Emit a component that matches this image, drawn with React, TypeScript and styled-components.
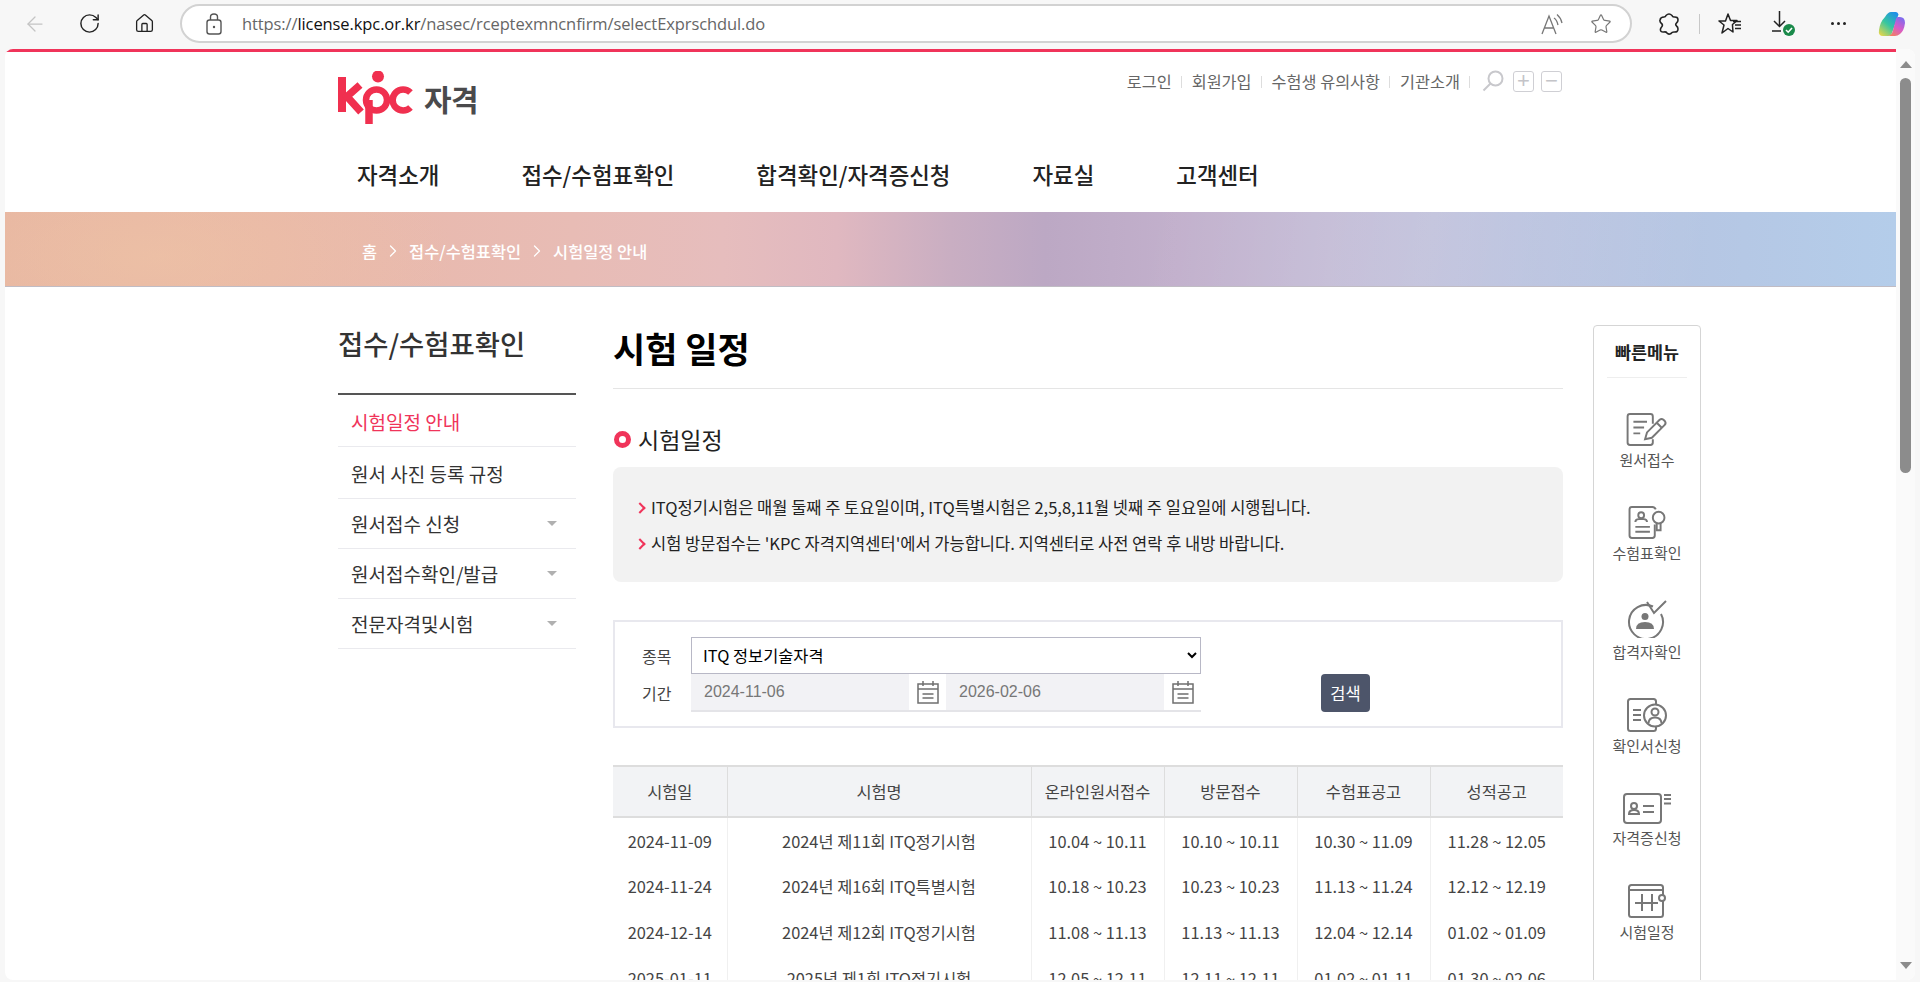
import styled, { createGlobalStyle } from "styled-components";
import { ArrowLeft, ChevronRight, House, RotateCw, Star } from "lucide-react";

const FONT = `"Noto Sans CJK KR", "Noto Sans", sans-serif`;

const GlobalStyle = createGlobalStyle`
    html, body {
        height: 100%;
        margin: 0;
        overflow: hidden;
        background: #f7f7f7;
        font-family: ${FONT};
    }
    * {
        box-sizing: border-box;
    }
`;

const navItems = ["자격소개", "접수/수험표확인", "합격확인/자격증신청", "자료실", "고객센터"];
const utilItems = ["로그인", "회원가입", "수험생 유의사항", "기관소개"];
const sideItems = [
    { name: "시험일정 안내", active: true, sub: false },
    { name: "원서 사진 등록 규정", active: false, sub: false },
    { name: "원서접수 신청", active: false, sub: true },
    { name: "원서접수확인/발급", active: false, sub: true },
    { name: "전문자격및시험", active: false, sub: true },
];
const columns = [
    { name: "시험일", width: 114 },
    { name: "시험명", width: 304 },
    { name: "온라인원서접수", width: 133 },
    { name: "방문접수", width: 133 },
    { name: "수험표공고", width: 133 },
    { name: "성적공고", width: 133 },
];
const rows = [
    ["2024-11-09", "2024년 제11회 ITQ정기시험", "10.04 ~ 10.11", "10.10 ~ 10.11", "10.30 ~ 11.09", "11.28 ~ 12.05"],
    ["2024-11-24", "2024년 제16회 ITQ특별시험", "10.18 ~ 10.23", "10.23 ~ 10.23", "11.13 ~ 11.24", "12.12 ~ 12.19"],
    ["2024-12-14", "2024년 제12회 ITQ정기시험", "11.08 ~ 11.13", "11.13 ~ 11.13", "12.04 ~ 12.14", "01.02 ~ 01.09"],
    ["2025-01-11", "2025년 제1회 ITQ정기시험", "12.05 ~ 12.11", "12.11 ~ 12.11", "01.02 ~ 01.11", "01.30 ~ 02.06"],
];

const QuickIcon1 = () => (
    <QuickSvg width="42" height="33" viewBox="0 0 42 34">
        <path d="M27 11V3.500Q27 1 24.500 1H3.500Q1 1 1 3.500V30.500Q1 33 3.500 33H24.500Q27 33 27 30.500V27" />
        <path d="M7 9H21M7 15H18M7 21H14" />
        <path d="M19 27L21 20L34 7Q36 5.500 38 7L39.500 8.500Q41 10.500 39 12.500L26 25.500Z" />
        <path d="M31 10L36.500 15.500" />
    </QuickSvg>
);

const QuickIcon2 = () => (
    <QuickSvg width="38" height="33" viewBox="0 0 38 34">
        <path d="M28 3.500Q27 1 24.500 1H3.500Q1 1 1 3.500V30.500Q1 33 3.500 33H24.500Q27 33 27 30.500V19" />
        <circle cx="13" cy="9.500" r="3" />
        <path d="M7 16.500Q7 13.500 10.500 13.500H15.500Q19 13.500 19 16.500" />
        <path d="M7 21.500H22M7 26.500H22" />
        <circle cx="31" cy="12" r="6" />
        <path d="M29 18V25H33V18" />
    </QuickSvg>
);

const QuickIcon3 = () => (
    <QuickSvg width="40" height="38" viewBox="0 0 40 38">
        <path d="M26 6.500A17 17 0 1 0 34 14" />
        <path d="M20 2L27 13L39 1" />
        <circle cx="18" cy="16.500" r="3.500" fill="#777" stroke="none" />
        <path d="M9 29Q9 22 18 22Q27 22 27 29Z" fill="#777" stroke="none" />
    </QuickSvg>
);

const QuickIcon4 = () => (
    <QuickSvg width="40" height="34" viewBox="0 0 40 34">
        <path d="M29 6V3.500Q29 1 26.500 1H3.500Q1 1 1 3.500V30.500Q1 33 3.500 33H26.500Q29 33 29 30.500V29" />
        <path d="M6 12H14M6 17H14M6 22H14" />
        <circle cx="28" cy="17.500" r="11" />
        <circle cx="28" cy="14" r="3.500" />
        <path d="M21.500 25Q22 19.500 28 19.500Q34 19.500 34.500 25" />
    </QuickSvg>
);

const QuickIcon5 = () => (
    <QuickSvg width="49" height="32" viewBox="0 0 49 32">
        <rect x="1" y="2" width="37" height="29" rx="3" />
        <circle cx="11" cy="14" r="3" />
        <path d="M6 22Q6 18 11 18Q16 18 16 22Z" />
        <path d="M20 14H31M20 20H31" />
        <path d="M41 3H48M41 7H48M41 11.500H48" />
    </QuickSvg>
);

const QuickIcon6 = () => (
    <QuickSvg width="38" height="34" viewBox="0 0 38 34">
        <path d="M35 11V3.500Q35 1 32.500 1H3.500Q1 1 1 3.500V30.500Q1 33 3.500 33H32.500Q35 33 35 30.500V17" />
        <path d="M1 6H35" />
        <path d="M7 19H30M14 10V27M24 10V27" />
        <circle cx="34" cy="14" r="3" />
    </QuickSvg>
);

const quickItems = [
    { name: "원서접수", Icon: QuickIcon1 },
    { name: "수험표확인", Icon: QuickIcon2 },
    { name: "합격자확인", Icon: QuickIcon3 },
    { name: "확인서신청", Icon: QuickIcon4 },
    { name: "자격증신청", Icon: QuickIcon5 },
    { name: "시험일정", Icon: QuickIcon6 },
];

const CalendarIcon = () => (
    <svg width="24" height="24" viewBox="0 0 24 24" fill="none" stroke="#6f6f6f" strokeWidth="1.500">
        <rect x="2" y="4" width="20" height="19" />
        <path d="M2 9H22M7 1V6M17 1V6M6.500 14H17.500M6.500 18H17.500" />
    </svg>
);

const KpcLogo = () => (
    <svg width="78" height="55" viewBox="0 0 78 55" fill="none" stroke="#f0304f">
        <path d="M4 6V41" strokeWidth="8" />
        <path d="M22 14L9 25.500L23 41" strokeWidth="7.500" />
        <circle cx="38.500" cy="29" r="10.500" strokeWidth="6.500" />
        <path d="M31 29V53" strokeWidth="7.500" />
        <circle cx="40" cy="5.500" r="6" fill="#f0304f" stroke="none" />
        <path d="M72.500 21.500A10.500 10.500 0 1 0 72.500 36.500" strokeWidth="6.500" />
    </svg>
);

const LockIcon = () => (
    <svg width="18" height="24" viewBox="0 0 18 24" fill="none" stroke="#555" strokeWidth="1.400">
        <rect x="2" y="8" width="14" height="14" rx="2.500" />
        <path d="M5.500 8V5Q5.500 2 9 2Q12.500 2 12.500 5V8" />
        <circle cx="9" cy="15" r="1.200" fill="#555" stroke="none" />
    </svg>
);

const ReadAloudIcon = () => (
    <svg width="24" height="24" viewBox="0 0 24 24" fill="none" stroke="#777" strokeWidth="1.300">
        <path d="M2 22L9 4L16 22M4.500 16H13.500" />
        <path d="M14 6Q17 8 18 13M17 2.500Q21 6 22 11" />
    </svg>
);

const ExtensionIcon = () => (
    <svg width="22" height="24" viewBox="0 0 22 24" fill="none" stroke="#222" strokeWidth="1.600" strokeLinejoin="round">
        <path d="M8 3.500Q11 0.500 14 3.500Q14.500 5 16 5Q20 4.500 20 8Q20 10 18.500 11Q17 12.500 18.500 14Q20 15 20 17Q20 20.500 16 20Q14 20 13 21.500Q10.500 23 9 21Q8 19.500 6 20Q2 20.500 2.500 17Q3 15.500 4 14.500Q5 12.500 3.500 11.500Q1.500 10 2 8Q2.500 5 6 5Q7.500 5 8 3.500Z" />
    </svg>
);

const FavoritesIcon = () => (
    <svg width="24" height="24" viewBox="0 0 24 24" fill="none" stroke="#222" strokeWidth="1.500" strokeLinejoin="round">
        <path d="M10 2L12.500 8.500H19L14.500 12.500V13.500L15 20L10 16.500L4 21L6 13L1 9H7.500Z" />
        <path d="M15 9.500H23M17 13H23M17 16.500H23" />
    </svg>
);

const DownloadIcon = () => (
    <svg width="24" height="26" viewBox="0 0 24 26" fill="none" stroke="#222" strokeWidth="1.500">
        <path d="M7.500 0V15M2 10L7.500 15.500L13 10M0 20H9" />
        <circle cx="17" cy="19" r="6" fill="#1a8a4a" stroke="none" />
        <path d="M14 19L16.200 21.200L20 17" stroke="#fff" strokeWidth="1.600" />
    </svg>
);

const CopilotIcon = () => (
    <svg width="28" height="26" viewBox="0 0 28 26">
        <defs>
            <linearGradient id="copilotLeft" x1="0.800" y1="0" x2="0.100" y2="1">
                <stop offset="0" stopColor="#1f8fe8" />
                <stop offset="0.500" stopColor="#36c6a0" />
                <stop offset="1" stopColor="#e8d64a" />
            </linearGradient>
            <linearGradient id="copilotRight" x1="0.800" y1="0" x2="0.200" y2="1">
                <stop offset="0" stopColor="#7a6cf0" />
                <stop offset="0.500" stopColor="#d85bc8" />
                <stop offset="1" stopColor="#f4845a" />
            </linearGradient>
        </defs>
        <path d="M13 1H18Q20 1 20.500 3.500L14 22Q13 25 10 25H5Q0 25 1 19Q2 11 7 6Q10 1 13 1Z" fill="url(#copilotLeft)" />
        <path d="M20 6H22Q27 6 27 12Q26 20 22 23Q19 25.500 16 25H9Q13 25 14.500 21L17.500 10Q18 6 20 6Z" fill="url(#copilotRight)" />
    </svg>
);

const App = () => {
    return (
        <Window>
            <GlobalStyle />
            <Toolbar>
                <ToolSlot>
                    <ArrowLeft size={24} color="#c4c4c4" strokeWidth={1.25} />
                </ToolSlot>
                <ToolSlot>
                    <RotateCw size={23} color="#222" strokeWidth={1.5} />
                </ToolSlot>
                <ToolSlot>
                    <House size={21} color="#222" strokeWidth={1.5} />
                </ToolSlot>
                <AddressBar>
                    <LockIcon />
                    <Url>
                        https://<Host>license.kpc.or.kr</Host>/nasec/rceptexmncnfirm/selectExprschdul.do
                    </Url>
                    <AddressActions>
                        <ReadAloudIcon />
                        <Star size={22} color="#777" strokeWidth={1.3} />
                    </AddressActions>
                </AddressBar>
                <ToolGroup>
                    <ToolSlot $narrow>
                        <ExtensionIcon />
                    </ToolSlot>
                    <ToolDivider />
                    <ToolSlot $narrow>
                        <FavoritesIcon />
                    </ToolSlot>
                    <ToolSlot $narrow>
                        <DownloadIcon />
                    </ToolSlot>
                    <ToolSlot $narrow>
                        <Dots>
                            <i />
                            <i />
                            <i />
                        </Dots>
                    </ToolSlot>
                    <ToolSlot $narrow>
                        <CopilotIcon />
                    </ToolSlot>
                </ToolGroup>
            </Toolbar>
            <Frame>
                <Page>
                    <Header>
                        <TopRow>
                            <Logo>
                                <KpcLogo />
                                <LogoText>자격</LogoText>
                            </Logo>
                            <Util>
                                {utilItems.map((name) => (
                                    <UtilLink key={name}>{name}</UtilLink>
                                ))}
                                <SearchIcon>
                                    <svg width="22" height="22" viewBox="0 0 22 22" fill="none" stroke="#c8c8cc" strokeWidth="2">
                                        <circle cx="13.500" cy="8.500" r="7" />
                                        <path d="M8.500 13.500L1.500 20.500" />
                                    </svg>
                                </SearchIcon>
                                <ZoomButton>+</ZoomButton>
                                <ZoomButton>−</ZoomButton>
                            </Util>
                        </TopRow>
                        <Nav>
                            {navItems.map((name) => (
                                <NavItem key={name}>{name}</NavItem>
                            ))}
                        </Nav>
                    </Header>
                    <Band>
                        <Breadcrumb>
                            <span>홈</span>
                            <ChevronRight size={20} strokeWidth={1.5} />
                            <span>접수/수험표확인</span>
                            <ChevronRight size={20} strokeWidth={1.5} />
                            <span>시험일정 안내</span>
                        </Breadcrumb>
                    </Band>
                    <Body>
                        <Center>
                            <Side>
                                <SideTitle>접수/수험표확인</SideTitle>
                                {sideItems.map(({ name, active, sub }) => (
                                    <SideItem key={name} $active={active} $sub={sub}>
                                        {name}
                                        {sub && <SideArrow />}
                                    </SideItem>
                                ))}
                            </Side>
                            <Main>
                                <PageTitle>시험 일정</PageTitle>
                                <SectionTitle>
                                    <Bullet />
                                    시험일정
                                </SectionTitle>
                                <InfoBox>
                                    <InfoLine>
                                        ITQ정기시험은 매월 둘째 주 토요일이며, ITQ특별시험은 2,5,8,11월 넷째 주 일요일에 시행됩니다.
                                    </InfoLine>
                                    <InfoLine>
                                        시험 방문접수는 'KPC 자격지역센터'에서 가능합니다. 지역센터로 사전 연락 후 내방 바랍니다.
                                    </InfoLine>
                                </InfoBox>
                                <SearchBox>
                                    <FieldLabel>종목</FieldLabel>
                                    <Select defaultValue="itq">
                                        <option value="itq">ITQ 정보기술자격</option>
                                    </Select>
                                    <span />
                                    <span />
                                    <FieldLabel>기간</FieldLabel>
                                    <DateRange>
                                        <DateInput readOnly value="2024-11-06" />
                                        <CalendarButton>
                                            <CalendarIcon />
                                        </CalendarButton>
                                        <DateInput readOnly value="2026-02-06" />
                                        <CalendarButton>
                                            <CalendarIcon />
                                        </CalendarButton>
                                    </DateRange>
                                    <span />
                                    <SearchButton>검색</SearchButton>
                                </SearchBox>
                                <Table>
                                    <colgroup>
                                        {columns.map(({ name, width }) => (
                                            <col key={name} width={width} />
                                        ))}
                                    </colgroup>
                                    <thead>
                                        <tr>
                                            {columns.map(({ name }) => (
                                                <Th key={name}>{name}</Th>
                                            ))}
                                        </tr>
                                    </thead>
                                    <tbody>
                                        {rows.map((row) => (
                                            <tr key={row[0]}>
                                                {row.map((cell, idx) => (
                                                    <Td key={cell + String(idx)}>{cell}</Td>
                                                ))}
                                            </tr>
                                        ))}
                                    </tbody>
                                </Table>
                            </Main>
                        </Center>
                        <QuickColumn>
                            <QuickMenu>
                                <QuickTitle>빠른메뉴</QuickTitle>
                                <QuickList>
                                    {quickItems.map(({ name, Icon }) => (
                                        <QuickItem key={name}>
                                            <Icon />
                                            <span>{name}</span>
                                        </QuickItem>
                                    ))}
                                </QuickList>
                            </QuickMenu>
                        </QuickColumn>
                    </Body>
                </Page>
                <Scrollbar>
                    <ScrollArrow />
                    <ScrollThumb />
                    <ScrollArrow $down />
                </Scrollbar>
            </Frame>
        </Window>
    );
};

const Window = styled.div`
    display: flex;
    flex-direction: column;

    height: 982px;

    background: #f7f7f7;
`;

const Toolbar = styled.div`
    display: flex;
    align-items: center;

    height: 49px;

    padding-left: 7px;
    padding-bottom: 2px;
`;

const ToolSlot = styled.div<{ $narrow?: boolean }>`
    display: flex;
    align-items: center;
    justify-content: center;

    width: ${(props) => (props.$narrow ? "54px" : "55px")};
`;

const AddressBar = styled.div`
    display: flex;
    align-items: center;

    width: 1452px;
    height: 39px;

    margin-left: 8px;
    padding: 0 18px 0 23px;

    background: #fff;
    border: 2px solid #d2d2d2;
    border-radius: 20px;
`;

const Url = styled.span`
    flex: 1;

    margin-left: 19px;

    font-family: "Open Sans", sans-serif;
    font-size: 16.500px;
    letter-spacing: -0.1px;
    color: #666;
`;

const Host = styled.span`
    color: #111;
`;

const AddressActions = styled.div`
    display: flex;
    align-items: center;
    gap: 26px;
`;

const ToolGroup = styled.div`
    display: flex;
    align-items: center;

    margin-left: 10px;
`;

const ToolDivider = styled.div`
    width: 1px;
    height: 20px;

    margin: 0 3px;

    background: #c8c8c8;
`;

const Dots = styled.div`
    display: flex;
    gap: 3px;

    i {
        width: 3px;
        height: 3px;

        background: #222;
        border-radius: 50%;
    }
`;

const Frame = styled.div`
    display: flex;

    height: 931px;

    margin-left: 5px;
    margin-right: 5px;

    overflow: hidden;

    background: #fff;
    border-radius: 8px;
`;

const Page = styled.div`
    flex: 1;

    min-width: 0;

    overflow: hidden;

    border-top: 3px solid #f0345a;
`;

const Header = styled.div`
    width: 1225px;
    height: 160px;

    margin: 0 auto;
`;

const TopRow = styled.div`
    display: flex;
    justify-content: space-between;

    height: 92px;

    padding-top: 19px;
`;

const Logo = styled.div`
    display: flex;
    align-items: flex-start;
    gap: 8px;
`;

const LogoText = styled.span`
    margin-top: 9px;

    font-size: 30px;
    font-weight: 700;
    line-height: 36px;
    letter-spacing: -0.5px;
    color: #4a4a4c;
`;

const Util = styled.div`
    display: flex;
    align-items: center;

    height: 20px;

    padding-right: 1px;
`;

const UtilLink = styled.a`
    position: relative;

    padding-right: 10px;
    margin-right: 10px;

    font-size: 16.300px;
    color: #666;

    &::after {
        content: "";
        position: absolute;
        right: 0;
        top: 7px;

        width: 1px;
        height: 12px;

        background: #ddd;
    }
`;

const SearchIcon = styled.div`
    display: flex;

    margin-left: 2px;
    margin-right: 9px;
`;

const ZoomButton = styled.div`
    display: flex;
    align-items: center;
    justify-content: center;

    width: 21px;
    height: 21px;

    margin-right: 7px;

    font-size: 22px;
    font-family: "Liberation Sans", sans-serif;
    color: #c4c4c8;

    border: 1px solid #cfcfd4;
    border-radius: 3px;

    &:last-child {
        margin-right: 0;
    }
`;

const Nav = styled.nav`
    display: flex;
    align-items: center;
    gap: 82px;

    height: 60px;

    padding-left: 19px;
`;

const NavItem = styled.a`
    font-size: 22.400px;
    font-weight: 500;
    color: #222;
`;

const Band = styled.div`
    height: 75px;

    background:
        radial-gradient(ellipse 300px 120px at 8% 60%, rgba(240, 200, 165, 0.5), transparent),
        linear-gradient(100deg, transparent 60%, rgba(255, 255, 255, 0.12) 75%, transparent 90%),
        linear-gradient(
            90deg,
            #e7b5a2 0%,
            #e9b7a8 14%,
            #e8bcb5 30%,
            #e6bdbd 38%,
            #e0b8c0 44%,
            #c9aec2 50%,
            #bca8c4 55%,
            #c2b0cc 62%,
            #c2bad5 70%,
            #b9c1de 80%,
            #b5c8e5 92%,
            #b4cdea 100%
        );
    border-bottom: 1px solid #c0bcc4;
`;

const Breadcrumb = styled.div`
    display: flex;
    align-items: center;
    gap: 6px;

    width: 1225px;
    height: 74px;

    margin: 0 auto;
    padding-left: 24px;
    padding-top: 4px;

    font-size: 16.400px;
    font-weight: 500;
    color: #fff;
`;

const Body = styled.div`
    display: grid;
    grid-template-columns: 1fr 1225px 1fr;
`;

const Center = styled.div`
    grid-column: 2;

    display: grid;
    grid-template-columns: 238px 950px;
    column-gap: 37px;
`;

const Side = styled.aside`
    display: flex;
    flex-direction: column;
`;

const SideTitle = styled.h3`
    height: 108px;

    margin: 0;
    padding-top: 36px;

    font-size: 27.400px;
    font-weight: 500;
    line-height: 40px;
    color: #333;

    border-bottom: 2px solid #555;
`;

const SideItem = styled.a<{ $active?: boolean; $sub?: boolean }>`
    display: flex;
    align-items: center;
    justify-content: space-between;

    height: ${(props) => (props.$sub ? "50px" : "52px")};

    padding: ${(props) => (props.$sub ? "0" : "2px")} 19px 0 13px;

    font-size: 19px;
    color: ${(props) => (props.$active ? "#f0345a" : "#333")};

    border-bottom: 1px solid #eaeaee;
`;

const SideArrow = styled.i`
    width: 0;
    height: 0;

    border-top: 5px solid #b0b0b0;
    border-left: 5px solid transparent;
    border-right: 5px solid transparent;
`;

const Main = styled.main`
    display: flex;
    flex-direction: column;
`;

const PageTitle = styled.h2`
    height: 102px;

    margin: 0;
    padding-top: 40px;

    font-size: 35px;
    font-weight: 700;
    line-height: 42px;
    color: #000;

    border-bottom: 1px solid #e5e5e5;
`;

const SectionTitle = styled.h4`
    display: flex;
    align-items: center;
    gap: 7px;

    height: 30px;

    margin: 35px 0 13px 1px;

    font-size: 23px;
    font-weight: 400;
    color: #222;
`;

const Bullet = styled.i`
    width: 17px;
    height: 17px;

    border: 5px solid #f0345a;
    border-radius: 50%;
`;

const InfoBox = styled.div`
    height: 115px;

    padding: 22px 24px 0 38px;

    background: #f2f2f2;
    border-radius: 8px;
`;

const InfoLine = styled.p`
    position: relative;

    margin: 0;

    font-size: 16.500px;
    line-height: 36px;
    color: #222;

    &::before {
        content: "";
        position: absolute;
        left: -15px;
        top: 15px;

        width: 6px;
        height: 6px;

        border-top: 2px solid #f0345a;
        border-right: 2px solid #f0345a;
        transform: rotate(45deg);
    }
`;

const SearchBox = styled.div`
    display: grid;
    grid-template-columns: 76px 510px 120px 49px;
    grid-template-rows: 37px 38px;
    align-items: center;

    height: 108px;

    margin-top: 38px;
    padding-top: 15px;

    border: 2px solid #e8e8ee;
`;

const FieldLabel = styled.label`
    padding-left: 27px;

    font-size: 16px;
    color: #444;
`;

const Select = styled.select`
    width: 100%;
    height: 37px;

    padding-left: 7px;
    padding-bottom: 2px;

    font-family: ${FONT};
    font-size: 16.400px;
    color: #000;

    background: #fff;
    border: 1px solid #b8b8c6;
    border-radius: 0;
`;

const DateRange = styled.div`
    display: grid;
    grid-template-columns: 1fr 37px 1fr 37px;

    height: 38px;

    border-bottom: 2px solid #e4e4e8;
`;

const DateInput = styled.input`
    min-width: 0;
    width: 100%;

    padding-left: 13px;

    font-family: "Liberation Sans", sans-serif;
    font-size: 16px;
    color: #777;

    background: #f2f2f5;
    border: 0;
    outline: none;
`;

const CalendarButton = styled.div`
    display: flex;
    align-items: center;
    justify-content: center;
`;

const SearchButton = styled.button`
    width: 49px;
    height: 38px;

    padding: 0;

    font-family: ${FONT};
    font-size: 16.500px;
    color: #fff;

    background: #4d556a;
    border: 0;
    border-radius: 4px;
`;

const Table = styled.table`
    width: 950px;

    margin-top: 37px;

    table-layout: fixed;
    border-collapse: collapse;
`;

const Th = styled.th`
    height: 51px;

    padding: 0 0 2px;

    font-size: 16.400px;
    font-weight: 400;
    color: #444;

    background: #f2f3f5;
    border-top: 2px solid #ddd;
    border-bottom: 2px solid #ddd;
    border-left: 1px solid #ddd;

    &:first-child {
        border-left: 0;
    }
`;

const Td = styled.td`
    height: 46px;

    padding: 0;

    font-size: 16.400px;
    text-align: center;
    color: #444;

    border-left: 1px solid #f0f0f0;

    &:first-child {
        border-left: 0;
    }
`;

const QuickColumn = styled.div`
    padding-left: 30px;
`;

const QuickMenu = styled.div`
    width: 108px;
    height: 700px;

    margin-top: 38px;

    border: 1px solid #d5d5d5;
    border-radius: 4px;
`;

const QuickTitle = styled.div`
    height: 52px;

    margin: 0 13px;
    padding-top: 13px;

    font-size: 17.400px;
    font-weight: 700;
    line-height: 26px;
    text-align: center;
    color: #222;

    border-bottom: 1px solid #eee;
`;

const QuickList = styled.div`
    display: flex;
    flex-direction: column;
    gap: 36.250px;

    padding-top: 35px;
`;

const QuickItem = styled.a`
    display: flex;
    flex-direction: column;
    align-items: center;
    gap: 4px;

    font-size: 15px;
    line-height: 20px;
    white-space: nowrap;
    color: #555;
`;

const QuickSvg = styled.svg`
    fill: none;
    stroke: #777;
    stroke-width: 2;
`;

const Scrollbar = styled.div`
    display: flex;
    flex-direction: column;
    align-items: center;
    justify-content: flex-start;

    width: 19px;

    padding-top: 12px;

    background: #fafafa;
`;

const ScrollArrow = styled.i<{ $down?: boolean }>`
    width: 0;
    height: 0;

    margin-top: ${(props) => (props.$down ? "auto" : "0")};
    margin-bottom: ${(props) => (props.$down ? "11px" : "0")};

    border-left: 6px solid transparent;
    border-right: 6px solid transparent;
    border-top: ${(props) => (props.$down ? "7px solid #8c8c8c" : "0")};
    border-bottom: ${(props) => (props.$down ? "0" : "7px solid #8c8c8c")};
`;

const ScrollThumb = styled.div`
    width: 11px;
    height: 395px;

    margin-top: 10px;

    background: #8c8c8c;
    border-radius: 6px;
`;

export default App;
